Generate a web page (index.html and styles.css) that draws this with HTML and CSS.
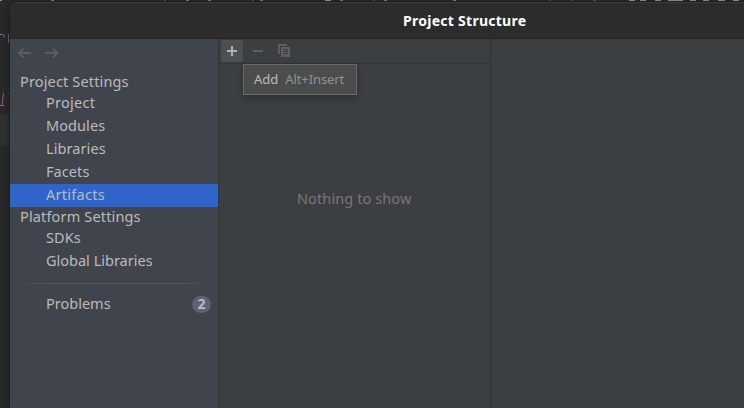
FILE: index.html
```
<!DOCTYPE html>
<html lang="en">
<head>
<meta charset="utf-8">
<title>Project Structure</title>
<link rel="stylesheet" href="styles.css">
</head>
<body>
<svg class="editor" width="744" height="408" aria-hidden="true">
  <rect x="0" y="115" width="10" height="31" fill="#303030"/>
  <g fill="#87939b">
    <rect x="629" width="6" height="1"/><rect x="640" width="6" height="1"/><rect x="655" width="6" height="1"/><rect x="668" width="15" height="1"/><rect x="690" width="6" height="1"/><rect x="703" width="6" height="1"/><rect x="718" width="7" height="1"/><rect x="733" width="6" height="1"/>
    <rect x="325" width="4" height="1"/>
  </g>
  <g fill="#637f9d">
    <rect x="51" width="2" height="1"/><rect x="186" width="2" height="1"/><rect x="208" width="2" height="1"/><rect x="260" width="2" height="1"/><rect x="340" width="2" height="1"/><rect x="384" width="2" height="1"/><rect x="453" width="2" height="1"/>
  </g>
  <g fill="#a0926e">
    <rect x="0" width="2" height="1"/><rect x="53" width="1" height="1"/><rect x="188" width="1" height="1"/><rect x="210" width="1" height="1"/><rect x="262" width="1" height="1"/><rect x="329" width="2" height="1"/><rect x="342" width="1" height="1"/><rect x="386" width="1" height="1"/><rect x="455" width="1" height="1"/>
  </g>
  <g fill="#4a555d">
    <rect x="164" width="2" height="1"/><rect x="252" width="2" height="1"/><rect x="373" width="2" height="1"/><rect x="549" width="2" height="1"/><rect x="571" width="2" height="1"/><rect x="593" width="3" height="1"/>
  </g>
  <path d="M0 34.5h2.500q1.500 0 2 3" fill="none" stroke="#77777b"/>
  <path d="M8.500 34v9" stroke="#596d7a"/>
  <path d="M3.500 93L2 105M0 105.500h4.500" fill="none" stroke="#8b6184"/>
  <path d="M8 93.500h2" stroke="#5b557e"/>
</svg>
<div class="window">
  <header class="titlebar"><span class="title">Project Structure</span></header>
  <div class="content">
    <nav class="sidebar">
      <div class="history">
        <svg width="14" height="12" viewBox="0 0 14 12"><path d="M13 6H1.500M5.500 1.500L1 6l4.500 4.500"/></svg>
        <svg width="14" height="12" viewBox="0 0 14 12"><path d="M0 6h12M8 1.500L12.500 6 8 10.500"/></svg>
      </div>
      <div class="group">Project Settings</div>
      <div class="item"><span class="label wide">Project</span></div>
      <div class="item"><span class="label">Modules</span></div>
      <div class="item"><span class="label">Libraries</span></div>
      <div class="item"><span class="label">Facets</span></div>
      <div class="item selected"><span class="label wide">Artifacts</span></div>
      <div class="group">Platform Settings</div>
      <div class="item"><span class="label">SDKs</span></div>
      <div class="item"><span class="label tight">Global Libraries</span></div>
      <div class="separator"></div>
      <div class="item problems"><span class="label tight">Problems</span><span class="badge">2</span></div>
    </nav>
    <section class="list">
      <div class="toolbar">
        <div class="tool active"><svg width="22" height="22"><path d="M6 11h10M11 6v10" stroke="#afb1b3" stroke-width="2"/></svg></div>
        <div class="tool"><svg width="22" height="22"><path d="M6 11h10" stroke="#5c5e5f" stroke-width="2"/></svg></div>
        <div class="tool"><svg width="22" height="22"><path d="M5 4h9v2H7v8H5z" fill="#5c5e5f"/><path d="M8 7h9v10H8z" fill="#5c5e5f"/><path d="M10 9.500h5M10 11.500h5M10 13.500h5" stroke="#3c3f41"/></svg></div>
      </div>
      <div class="empty">Nothing to show</div>
      <div class="tooltip"><span class="action">Add</span><span class="shortcut">Alt+Insert</span></div>
    </section>
    <main class="details"></main>
  </div>
</div>
</body>
</html>
```
FILE: styles.css
```
* { box-sizing: border-box; }
body {
  margin: 0;
  width: 744px;
  height: 408px;
  overflow: hidden;
  position: relative;
  background: #292929;
  color: #bbbbbb;
  font: 14.5px/20px "Noto Sans", sans-serif;
  white-space: nowrap;
}
.editor { position: absolute; left: 0; top: 0; }
.window {
  position: absolute;
  left: 10px;
  top: 2px;
  width: 750px;
  height: 406px;
  display: flex;
  flex-direction: column;
  border-radius: 8px 8px 0 0;
  background: #3c3f41;
  box-shadow: 0 0 0 1px #202020, 0 2px 8px rgba(0, 0, 0, .4);
}
.titlebar {
  height: 37px;
  flex: none;
  padding: 9px 0 0 393px;
  background: #2c2c2c;
  border-top: 1px solid #3a3a3a;
  border-bottom: 1px solid #242424;
  border-radius: 8px 8px 0 0;
  color: #ffffff;
  font-size: 14px;
  font-weight: 700;
  line-height: 18px;
  letter-spacing: .27px;
}
.content { display: flex; flex: 1; min-height: 0; }
.sidebar { width: 208px; flex: none; background: #40444d; }
.history { height: 33px; padding: 8px 0 0 8px; display: flex; gap: 13px; }
.history svg { fill: none; stroke: #5c5d60; stroke-width: 1.9; }
.group { height: 20px; padding-left: 10px; line-height: 18px; letter-spacing: .15px; }
.item {
  height: 23px;
  padding: 0 7px 0 36px;
  display: flex;
  align-items: flex-start;
  justify-content: space-between;
}
.label { line-height: 21px; letter-spacing: .08px; }
.wide { letter-spacing: .26px; }
.tight { letter-spacing: 0; }
.selected { background: #2f65ca; }
.problems .label { line-height: 23px; }
.separator {
  height: 1px;
  margin: 10px 7px 8px 8px;
  background: linear-gradient(90deg, transparent, #54575f 15%, #54575f 85%, transparent);
}
.badge {
  width: 19px;
  height: 17px;
  margin-top: 4px;
  border-radius: 9px;
  background: #5d6274;
  font-size: 14px;
  font-weight: 700;
  line-height: 16px;
  text-align: center;
}
.list {
  position: relative;
  width: 273px;
  flex: none;
  display: flex;
  flex-direction: column;
  border-left: 1px solid #323435;
  border-right: 1px solid #2f3132;
}
.toolbar {
  height: 25px;
  flex: none;
  display: flex;
  gap: 4px;
  padding: 1px 2px;
  border-bottom: 1px solid #323435;
}
.tool { width: 22px; height: 22px; border-radius: 2px; }
.tool svg { display: block; }
.active { background: #4c5052; }
.empty { padding: 124px 0 0 78px; color: #777777; letter-spacing: .1px; }
.tooltip {
  position: absolute;
  left: 24px;
  top: 25px;
  width: 114px;
  height: 31px;
  display: flex;
  gap: 7px;
  padding: 5px 10px;
  border: 1px solid #67696a;
  background: #4b4d4d;
  box-shadow: 0 3px 7px rgba(0, 0, 0, .25);
  font-size: 13px;
  line-height: 19px;
}
.shortcut { color: #919191; letter-spacing: -.1px; }
.details { flex: 1; background: #3c3f41; }
```
